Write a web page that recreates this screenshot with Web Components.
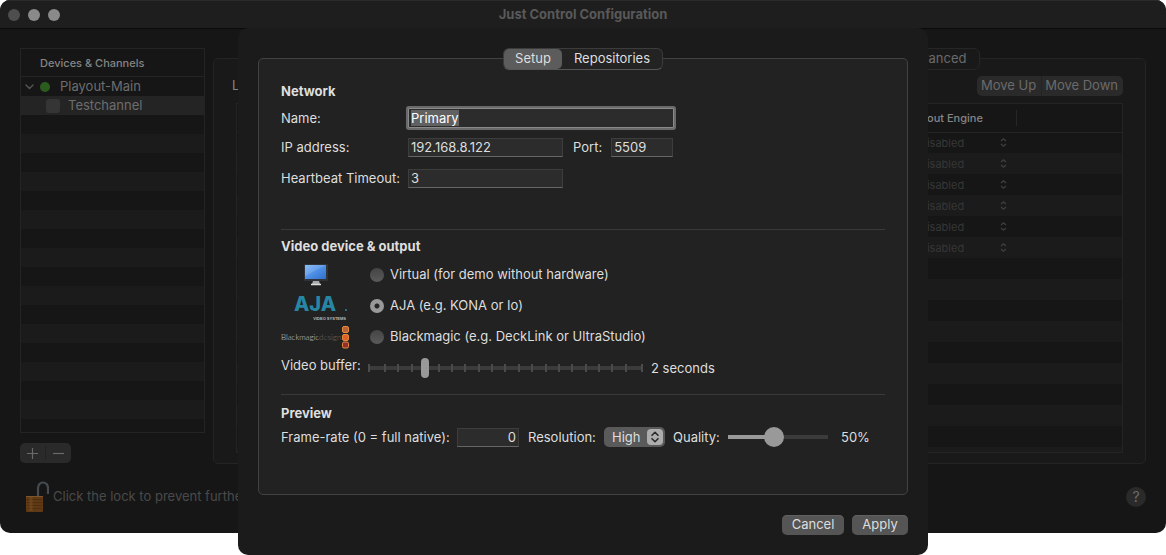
<!DOCTYPE html>
<html lang="en">
<head>
<meta charset="utf-8">
<title>Just Control Configuration</title>
<style>
  body { margin: 0; background: #fff; font: 13px/20px Inter, "Liberation Sans", sans-serif; color: #dedede; }
</style>
</head>
<body>
<jc-app>
  <jc-window slot="window" heading="Just Control Configuration">
    <jc-devices slot="side"></jc-devices>
    <jc-layers slot="main"></jc-layers>
    <jc-lockbar slot="foot"></jc-lockbar>
  </jc-window>
  <jc-sheet slot="sheet">
    <jc-network></jc-network>
    <jc-video></jc-video>
    <jc-preview></jc-preview>
  </jc-sheet>
</jc-app>

<script>
const base = `
  *, *::before, *::after { box-sizing: border-box; }
  button, input, select { font: inherit; color: inherit; margin: 0; }
  h1, h2, p, ul { margin: 0; padding: 0; font-size: inherit; }
  svg { display: block; }
`;
const define = (name, html) => customElements.define(name, class extends HTMLElement {
  constructor() {
    super();
    this.attachShadow({ mode: "open" }).innerHTML = `<style>${base}</style>` + html;
  }
  connectedCallback() {
    const h = this.shadowRoot.querySelector("[data-heading]");
    if (h) h.textContent = this.getAttribute("heading") || "";
  }
});

/* Stacks the modal sheet over the window behind it. */
define("jc-app", `
<style>
  :host { display: grid; grid-template-columns: minmax(0, 1fr); align-items: start; }
  slot { display: block; grid-area: 1 / 1; min-width: 0; }
  .over { margin-top: 28px; justify-self: center; z-index: 1; width: min(690px, 100%); }
</style>
<slot name="window"></slot>
<slot class="over" name="sheet"></slot>`);

define("jc-window", `
<style>
  :host { display: block; background: #161616; border-radius: 10px; overflow: hidden; }
  header { display: grid; grid-template-columns: 1fr auto 1fr; align-items: center; height: 29px;
    padding: 0 8px; background: #1e1e1e; border-bottom: 1px solid #0a0a0a; border-top: 1px solid #2a2a2a; }
  .lights { display: flex; gap: 8px; }
  .lights button { width: 12px; height: 12px; padding: 0; border: 0; border-radius: 50%; background: #8a8a8a; }
  .lights button:first-child { background: #4e4e4e; }
  h1 { font-weight: 700; color: #595959; padding-bottom: 2px; }
  .body { display: grid; grid-template-columns: 185px minmax(0, 1fr); gap: 8px; padding: 19px 20px 17px; }
  .foot { display: block; padding: 0 20px 21px 26px; }
</style>
<header>
  <div class="lights"><button aria-label="Close"></button><button aria-label="Minimize"></button><button aria-label="Zoom"></button></div>
  <h1 data-heading></h1><span></span>
</header>
<div class="body"><slot name="side"></slot><slot name="main"></slot></div>
<slot class="foot" name="foot"></slot>`);

define("jc-devices", `
<style>
  :host { display: block; color: #6d6d6d; }
  .list { height: 385px; border: 1px solid #242424;
    background: repeating-linear-gradient(#161616 0 19px, #1b1b1b 19px 38px) 0 28px; }
  h2 { height: 28px; padding-left: 19px; font: 500 11px/28px Inter, sans-serif; color: #858585; background: #161616;
    border-bottom: 1px solid #242424; }
  ul { list-style: none; }
  li { display: flex; align-items: center; height: 19px; line-height: 19px; }
  .device { padding-left: 4px; }
  .dot { width: 10px; height: 10px; margin: 0 10px 0 6px; border-radius: 50%; background: #2b5c1e; }
  .channel { background: #242424; padding-left: 25px; gap: 8px; }
  .channel input { appearance: none; width: 14px; height: 14px; border-radius: 3px; background: #353535; }
  .edit { display: inline-flex; align-items: center; width: 51px; height: 20px; margin-top: 10px; border-radius: 5px; background: #2a2a2a; }
  .edit button { flex: 1; display: grid; place-items: center; height: 14px; padding: 0; border: 0; background: none; }
  .edit button + button { border-left: 1px solid #222; }
</style>
<div class="list">
  <h2>Devices &amp; Channels</h2>
  <ul>
    <li class="device"><svg width="9" height="9" viewBox="0 0 9 9" fill="none" stroke="#555" stroke-width="1.4" stroke-linecap="round"><path d="M1 3l3.5 3.5L8 3"/></svg><span class="dot"></span><span>Playout-Main</span></li>
    <li class="channel"><input type="checkbox" id="test"><label for="test">Testchannel</label></li>
  </ul>
</div>
<div class="edit">
  <button aria-label="Add"><svg width="11" height="11" stroke="#6a6a6a" stroke-width="1.2"><path d="M5.5 0v11M0 5.5h11"/></svg></button>
  <button aria-label="Remove"><svg width="11" height="11" stroke="#6a6a6a" stroke-width="1.2"><path d="M0 5.5h11"/></svg></button>
</div>`);

const engineRow = n => `<tr><td></td><td><span class="pick"><select aria-label="Engine ${n}" disabled><option>Disabled</option></select>
  <svg width="7" height="9" viewBox="0 0 7 9" fill="none" stroke="#404040" stroke-width="1.2"><path d="M1 3l2.500-2.200L6 3M1 6l2.500 2.200L6 6"/></svg></span></td><td></td></tr>`;
define("jc-layers", `
<style>
  :host { display: block; color: #6a6a6a; }
  .tabs { display: flex; justify-content: flex-end; position: relative; width: 600px; max-width: 100%; height: 22px; margin: 0 auto -12px;
    border: 1px solid #262626; border-radius: 6px; background: #191919; }
  .tabs button { padding: 0 12px 2px; border: 0; background: none; line-height: 18px; }
  .box { border: 1px solid #242424; border-radius: 5px; background: #191919; padding: 17px 22px 10px; }
  .bar { display: flex; justify-content: flex-end; margin-bottom: 7px; }
  .bar div { display: flex; align-items: center; border-radius: 5px; background: #2a2a2a; }
  .bar button { padding: 0 5px 2px 4px; border: 0; background: none; height: 20px; line-height: 18px; }
  .bar button + button { box-shadow: inset 1px 0 #222; }
  .bar p { flex: 1; margin-left: -4px; color: #858585; line-height: 18px; }
  .list { height: 350px; border: 1px solid #242424; overflow: hidden;
    background: repeating-linear-gradient(#161616 0 21px, #1b1b1b 21px 42px) 0 28px; }
  table { width: 100%; border-collapse: collapse; table-layout: fixed; font-size: 11px; line-height: 21px; }
  th { height: 28px; padding: 0; font-weight: 500; color: #858585; text-align: left; background: #161616; border-bottom: 1px solid #242424; }
  th:nth-child(2) { width: 114px; padding-left: 2px; }
  th:nth-child(3) { width: 105px; }
  th:nth-child(2) span { display: block; height: 16px; line-height: 16px; border-right: 1px solid #262626; }
  td { height: 21px; padding: 0; }
  .pick { display: flex; align-items: center; padding: 0 10px 0 16px; color: #363636; }
  .pick svg { margin-bottom: 2px; }
  select { appearance: none; flex: 1; border: 0; padding: 0 0 2px; background: none; height: 21px; opacity: 1; }
</style>
<div class="tabs"><button>Advanced</button></div>
<div class="box">
  <div class="bar"><p>Layers</p><div><button>Move Up</button><button>Move Down</button></div></div>
  <div class="list"><table>
    <thead><tr><th></th><th><span>Playout Engine</span></th><th></th></tr></thead>
    <tbody>${[1, 2, 3, 4, 5, 6].map(engineRow).join("")}</tbody>
  </table></div>
</div>`);

define("jc-lockbar", `
<style>
  :host { display: flex; align-items: center; gap: 4px; color: #4a4a4a; }
  p { flex: 1; padding-bottom: 2px; }
  button { width: 20px; height: 20px; padding: 0; border: 0; border-radius: 50%; background: #2a2a2a; color: #6a6a6a; font-size: 14px; line-height: 20px; }
</style>
<svg width="23" height="31" viewBox="0 0 23 31">
  <path d="M12 15V7a5 5.500 0 0 1 10 0v6" fill="none" stroke="#454b50" stroke-width="2.200"/>
  <rect x="0" y="15" width="17" height="16" rx="1" fill="#5f3a14"/>
  <path d="M0 15.500h17" stroke="#80552a"/>
  <path d="M1 18.500h15M1 21.500h15M1 24.500h15M1 27.500h15" stroke="#4c2c0f" stroke-width=".8"/>
  <path d="M5 16v14" stroke="#7b5226" stroke-width="3" opacity=".5"/>
</svg>
<p>Click the lock to prevent further changes.</p>
<button aria-label="Help">?</button>`);

define("jc-sheet", `
<style>
  :host { display: block; background: #1b1b1b; border-radius: 10px; padding: 20px; }
  .tabs { display: flex; position: relative; width: 160px; height: 22px; margin: 0 auto -12px; border: 1px solid #3c3c3c;
    border-bottom-color: #555; border-radius: 6px; background: #232323; }
  .tabs button { flex: 1 0 auto; padding: 0 0 2px; border: 0; border-radius: 5px; background: none; line-height: 18px; }
  .tabs .on { flex: 0 0 58px; background: #5c5c5c; }
  .box { display: flow-root; border: 1px solid #424242; border-radius: 5px; background: #222; padding: 22px 22px 46px; }
  .actions { display: flex; justify-content: flex-end; gap: 8px; padding-top: 20px; }
  .actions button { height: 20px; line-height: 18px; padding: 0 0 2px; border: 0; border-radius: 5px; background: #555; box-shadow: inset 0 1px #606060; }
  .cancel { width: 62px; } .apply { width: 56px; }
</style>
<div class="tabs" role="tablist"><button class="on" role="tab" aria-selected="true">Setup</button><button role="tab">Repositories</button></div>
<div class="box"><slot></slot></div>
<div class="actions"><button class="cancel">Cancel</button><button class="apply">Apply</button></div>`);

const form = `
  h2 { font-weight: 700; margin-bottom: 3px; }
  .row { display: flex; align-items: center; min-height: 31px; }
  .row label { padding-bottom: 1px; }
  .text { height: 19px; padding: 0 2px 1px; border: 1px solid #3d3d3d; border-bottom-color: #666; background: #2c2c2c; outline: 0; line-height: 16px; }
`;
define("jc-network", `
<style>
  :host { display: block; padding-bottom: 35px; border-bottom: 1px solid #3a3a3a; }
  ${form}
  .key { flex: 0 0 127px; }
  .name { min-height: 28px; }
  .name .text { width: 266px; height: 20px; border-color: #8a8a8a; box-shadow: 0 0 0 2px #6a6a6a; border-radius: 1px; }
  .wide { width: 155px; } .port { width: 62px; }
  .sub { margin: 0 9px 0 10px; }
  ::selection { background: #616161; color: #fff; }
</style>
<h2>Network</h2>
<div class="row name"><label class="key" for="name">Name:</label><input class="text" id="name" value="Primary"></div>
<div class="row"><label class="key" for="ip">IP address:</label><input class="text wide" id="ip" value="192.168.8.122"><label class="sub" for="port">Port:</label><input class="text port" id="port" value="5509"></div>
<div class="row"><label class="key" for="beat">Heartbeat Timeout:</label><input class="text wide" id="beat" value="3"></div>`);

define("jc-video", `
<style>
  :host { display: block; padding: 6px 0 11px; border-bottom: 1px solid #3a3a3a; }
  ${form}
  .logo { flex: 0 0 69px; margin-right: 20px; display: grid; justify-items: center; }
  .radio { appearance: none; width: 14px; height: 14px; margin-right: 6px; border-radius: 50%; background: linear-gradient(#454545, #5a5a5a); }
  .radio:checked { background: radial-gradient(circle, #242424 0 2px, #999 3px); }
  .row .key { flex: 0 0 87px; padding-bottom: 5px; }
  .range { display: grid; align-items: center; width: 275px; margin-right: 8px; }
  .range > * { grid-area: 1 / 1; }
  .ticks { display: flex; justify-content: space-between; padding: 0 14px; height: 8px; border: solid #4c4c4c; border-width: 0 2px;
    background: linear-gradient(#3b3b3b, #3b3b3b) 0 50% / 100% 4px no-repeat; }
  .ticks i { width: 2px; background: #4a4a4a; }
  #buffer { appearance: none; width: 100%; height: 20px; background: none; z-index: 1; }
  #buffer::-webkit-slider-thumb { appearance: none; width: 8px; height: 20px; border-radius: 4px; background: #999; }
</style>
<h2>Video device &amp; output</h2>
<div class="row"><span class="logo"><svg width="24" height="24" viewBox="0 0 24 24">
  <defs><linearGradient id="scr" x1="0" y1="0" x2="1" y2="1"><stop offset="0" stop-color="#7db4f7"/><stop offset=".5" stop-color="#4e8fe6"/><stop offset="1" stop-color="#2f6fc9"/></linearGradient></defs>
  <rect x="0" y="1" width="24" height="17" rx="1" fill="#303438"/><rect x="1" y="2" width="21" height="14" fill="url(#scr)"/>
  <path d="M1 2h21L1 13z" fill="#fff" opacity=".12"/>
  <path d="M9 18h6l1 3H8z" fill="#aaa"/><path d="M7 21.500h10" stroke="#ddd" stroke-width="1.500"/></svg></span>
  <input class="radio" type="radio" name="dev" id="virtual"><label for="virtual">Virtual (for demo without hardware)</label></div>
<div class="row"><span class="logo"><svg width="69" height="30" viewBox="0 0 69 30">
  <text x="34" y="20" text-anchor="middle" font-family="Inter" font-weight="800" font-size="20" fill="#2786a3">AJA</text>
  <circle cx="65" cy="19" r="1" fill="#2786a3"/>
  <text x="65" y="29" text-anchor="end" font-family="Liberation Sans" font-size="4" font-weight="700" fill="#bbb">VIDEO SYSTEMS</text></svg></span>
  <input class="radio" type="radio" name="dev" id="aja" checked><label for="aja">AJA (e.g. KONA or Io)</label></div>
<div class="row"><span class="logo"><svg width="69" height="24" viewBox="0 0 69 24">
  <text x="0" y="15" font-family="Lato" font-weight="300" font-size="8" fill="#d0d0d0">Blackmagic<tspan fill="#707070">design</tspan></text>
  <g stroke="#e58a3c" stroke-width="1"><rect x="61.500" y="1.500" width="6" height="6" rx="1.500" fill="#b5623c"/><rect x="61.500" y="9.500" width="6" height="6" rx="1.500" fill="#e0602c"/><rect x="61.500" y="17" width="6" height="6" rx="1.500" fill="#8f2f32"/></g></svg></span>
  <input class="radio" type="radio" name="dev" id="bm"><label for="bm">Blackmagic (e.g. DeckLink or UltraStudio)</label></div>
<div class="row"><label class="key" for="buffer">Video buffer:</label>
  <div class="range"><div class="ticks">${"<i></i>".repeat(19)}</div><input type="range" id="buffer" min="0" max="20" value="4"></div>
  <output for="buffer">2 seconds</output></div>`);

define("jc-preview", `
<style>
  :host { display: block; padding-top: 8px; }
  ${form}
  .row { min-height: 22px; }
  .key { flex: 0 0 176px; }
  #rate { width: 62px; text-align: right; margin-right: 9px; }
  .res { flex: 0 0 76px; } .q { flex: 0 0 55px; }
  .pick { display: grid; align-items: center; margin-right: 8px; }
  .pick > * { grid-area: 1 / 1; }
  select { appearance: none; width: 61px; height: 20px; padding: 0 8px; border: 0; border-radius: 5px; background: #5a5a5a; line-height: 20px; }
  .pick svg { justify-self: end; margin-right: 2px; pointer-events: none; }
  #quality { appearance: none; width: 100px; height: 20px; margin-right: 13px;
    background: linear-gradient(90deg, #999 45%, #3b3b3b 45%) 0 50% / 100% 4px no-repeat; }
  #quality::-webkit-slider-thumb { appearance: none; width: 20px; height: 20px; border-radius: 50%; background: #999; }
</style>
<h2>Preview</h2>
<div class="row">
  <label class="key" for="rate">Frame-rate (0 = full native):</label><input class="text" id="rate" value="0">
  <label class="res" for="res">Resolution:</label>
  <span class="pick"><select id="res"><option>High</option></select>
    <svg width="16" height="16" viewBox="0 0 16 16"><rect width="16" height="16" rx="4" fill="#adadad"/><path d="M5 6.300l3-3 3 3M5 9.700l3 3 3-3" fill="none" stroke="#2a2a2a" stroke-width="1.600" stroke-linecap="round" stroke-linejoin="round"/></svg></span>
  <label class="q" for="quality">Quality:</label><input type="range" id="quality" min="0" max="100" value="45">
  <output for="quality">50%</output>
</div>`);

const nameField = document.querySelector("jc-network").shadowRoot.getElementById("name");
nameField.focus();
nameField.select();
</script>
</body>
</html>
